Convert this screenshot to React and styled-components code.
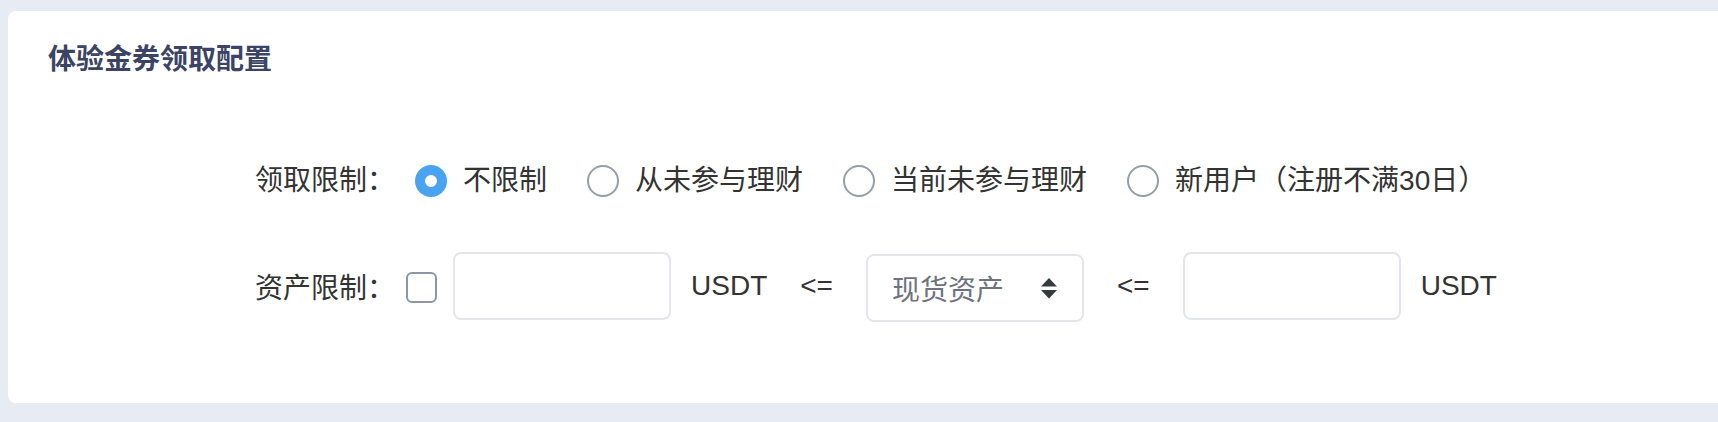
import React from "react";
import styled, { createGlobalStyle } from "styled-components";

const GlobalStyle = createGlobalStyle`
  html, body {
    margin: 0;
    padding: 0;
    background: #e7ebf3;
    overflow: hidden;
  }
  body {
    font-family: "Liberation Sans", "Noto Sans CJK SC", sans-serif;
    color: #333;
  }
`;

const limitOptions = [
  { value: "none", label: "不限制" },
  { value: "never", label: "从未参与理财" },
  { value: "current", label: "当前未参与理财" },
  { value: "new", label: "新用户（注册不满30日）" },
];

const Page = () => {
  const [limit, setLimit] = React.useState("none");

  return (
    <Wrapper>
      <GlobalStyle />
      <Card>
        <Title>体验金券领取配置</Title>
        <Form>
          <Row>
            <Label>领取限制：</Label>
            <Options>
              {limitOptions.map((opt) => (
                <Option key={opt.value}>
                  <Radio
                    type="radio"
                    name="limit"
                    checked={limit === opt.value}
                    onChange={() => setLimit(opt.value)}
                  />
                  <OptionText>{opt.label}</OptionText>
                </Option>
              ))}
            </Options>
          </Row>
          <Row>
            <Label>资产限制：</Label>
            <Checkbox type="checkbox" />
            <Input type="text" />
            <Unit>USDT</Unit>
            <Compare>&lt;=</Compare>
            <SelectBox>
              <SelectText>现货资产</SelectText>
              <svg width="16" height="21" viewBox="0 0 16 21">
                <path d="M8 0 L16 8.5 L0 8.5 Z" fill="#343a40" />
                <path d="M0 12 L16 12 L8 20.5 Z" fill="#343a40" />
              </svg>
            </SelectBox>
            <Compare>&lt;=</Compare>
            <Input type="text" />
            <Unit>USDT</Unit>
          </Row>
        </Form>
      </Card>
    </Wrapper>
  );
};

export default function App() {
  return <Page />;
}

// Page background and spacing round the card
const Wrapper = styled.div`
  padding: 11px 0 19px 8px;
`;

// White panel, flush with the right edge of the window
const Card = styled.section`
  background: #fff;
  border-radius: 8px 0 0 8px;
  height: 392px;
  box-sizing: border-box;
  padding-top: 26px;
`;

const Title = styled.h2`
  margin: 0;
  padding-left: 40px;
  font-family: "Noto Sans CJK SC", sans-serif;
  font-size: 28px;
  line-height: 40px;
  font-weight: 700;
  color: #3c4465;
`;

const Form = styled.div`
  display: flex;
  flex-direction: column;
  gap: 40px;
  padding: 67px 0 0 247px;
`;

const Row = styled.div`
  display: flex;
  align-items: center;
  height: 68px;
  font-size: 28px;
`;

const Label = styled.span`
  color: #333;
  white-space: nowrap;
`;

const Options = styled.div`
  display: flex;
  align-items: center;
  margin-left: 20px;
`;

const Option = styled.label`
  display: flex;
  align-items: center;
  margin-right: 40px;
  cursor: pointer;
`;

const Radio = styled.input`
  appearance: none;
  margin: 6px 0 0;
  width: 32px;
  height: 32px;
  border-radius: 50%;
  box-sizing: border-box;
  border: 2px solid #959eaa;
  background: #fff;
  cursor: pointer;

  &:checked {
    border: none;
    box-shadow: inset 0 0 0 10px #4aa3f0;
  }
`;

const OptionText = styled.span`
  margin-left: 16px;
  color: #333;
  white-space: nowrap;
`;

const Checkbox = styled.input`
  appearance: none;
  margin: 3px 0 0 11px;
  width: 31px;
  height: 31px;
  box-sizing: border-box;
  border: 2px solid #8d96a4;
  border-radius: 6px;
  background: #fff;
`;

const Input = styled.input`
  width: 218px;
  height: 68px;
  box-sizing: border-box;
  margin-left: 16px;
  border: 2px solid #e4e6eb;
  border-radius: 8px;
  outline: none;
  font: inherit;
  padding: 0 20px;

  & + span {
    margin-left: 20px;
  }
`;

const Unit = styled.span`
  color: #333;
`;

const Compare = styled.span`
  margin: 0 33px;
  color: #333;

  & + input {
    margin-left: 0;
  }
`;

const SelectBox = styled.div`
  display: flex;
  align-items: center;
  justify-content: space-between;
  width: 218px;
  height: 68px;
  margin-top: 4px;
  box-sizing: border-box;
  padding: 0 25px 0 24px;
  border: 2px solid #e4e6eb;
  border-radius: 8px;
  cursor: pointer;
`;

const SelectText = styled.span`
  color: #6e737d;
`;
